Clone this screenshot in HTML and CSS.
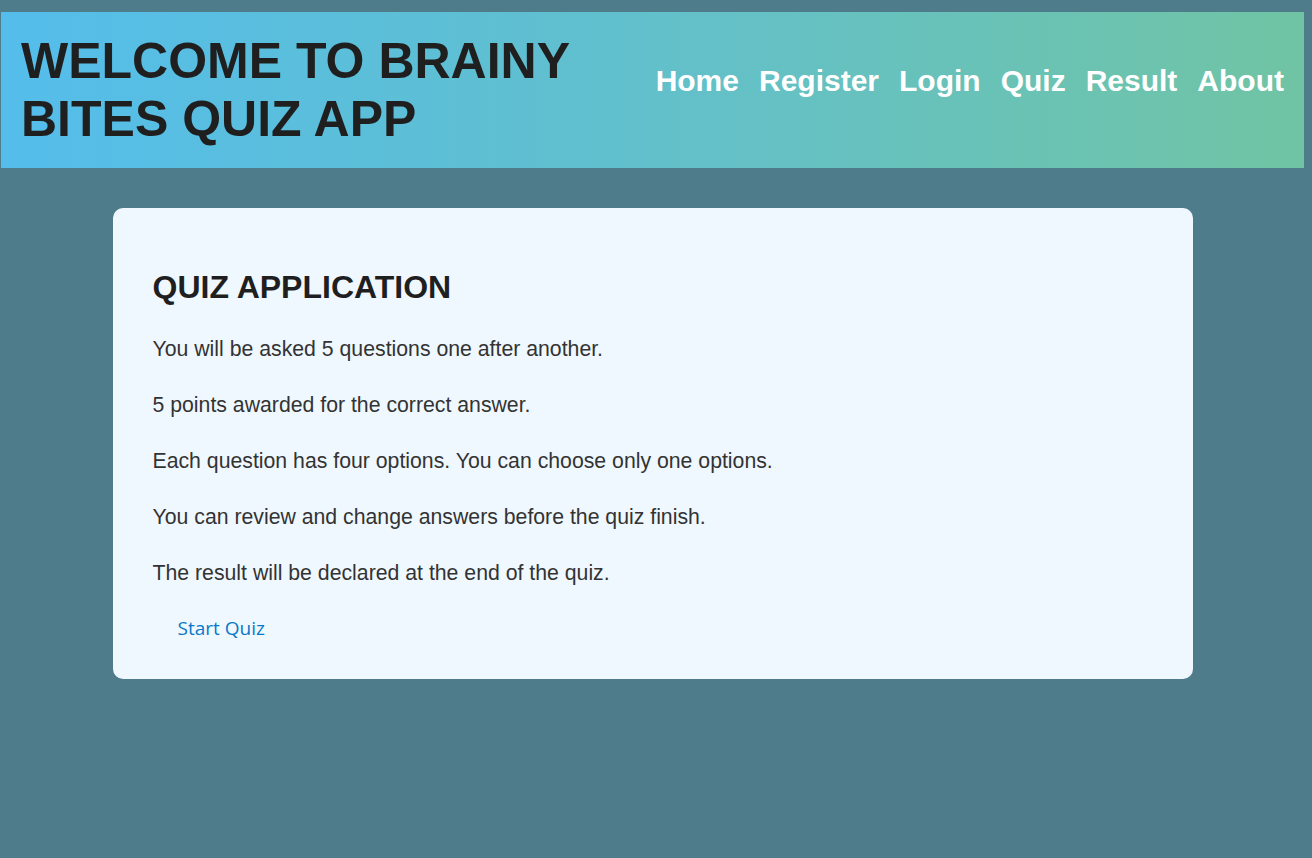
FILE: index.html
```html
<!DOCTYPE html>
<html lang="en">
<head>
<meta charset="utf-8">
<title>Brainy Bites Quiz App</title>
<link rel="stylesheet" href="styles.css">
</head>
<body>
<div class="page">
  <header class="site-header">
    <h1 class="site-title">WELCOME TO BRAINY BITES QUIZ APP</h1>
    <nav class="site-nav">
      <a href="#" class="nav-link">Home</a>
      <a href="#" class="nav-link">Register</a>
      <a href="#" class="nav-link">Login</a>
      <a href="#" class="nav-link">Quiz</a>
      <a href="#" class="nav-link">Result</a>
      <a href="#" class="nav-link">About</a>
    </nav>
  </header>
  <main class="card">
    <h2 class="card-title">QUIZ APPLICATION</h2>
    <p class="rule">You will be asked 5 questions one after another.</p>
    <p class="rule">5 points awarded for the correct answer.</p>
    <p class="rule">Each question has four options. You can choose only one options.</p>
    <p class="rule">You can review and change answers before the quiz finish.</p>
    <p class="rule">The result will be declared at the end of the quiz.</p>
    <button class="start-btn" type="button">Start Quiz</button>
  </main>
</div>
</body>
</html>
```
FILE: styles.css
```css
html, body {
  margin: 0;
  padding: 0;
}
body {
  background: #4e7c8a;
  font-family: "Liberation Sans", Arial, sans-serif;
  min-height: 858px;
}
.page {
  margin: 12px 8px 0 1px;
}
.site-header {
  display: flex;
  align-items: center;
  gap: 20px;
  padding: 20px;
  background: linear-gradient(to right, #54bdeb 0%, #62c0cb 50%, #70c4a4 100%);
}
.site-title {
  flex: 1;
  margin: 0;
  font-size: 50px;
  font-weight: bold;
  color: #1f1f1f;
  line-height: 58px;
}
.site-nav {
  display: flex;
  gap: 20px;
  flex: none;
  padding-bottom: 18px;
}
.nav-link {
  color: #ffffff;
  text-decoration: none;
  font-size: 30px;
  font-weight: bold;
}
.card {
  display: block;
  width: 1080px;
  box-sizing: border-box;
  margin: 40px auto 0;
  padding: 40px 40px 33px;
  background: #f0f8ff;
  border-radius: 10px;
}
.card-title {
  margin: 21px 0 26px;
  font-size: 32px;
  font-weight: bold;
  color: #1f1f1f;
}
.rule {
  margin: 21px 0;
  font-size: 21.25px;
  line-height: 35px;
  color: #333333;
}
.start-btn {
  display: inline-block;
  margin: 0;
  padding: 3px 25px 5px;
  border: none;
  background: transparent;
  color: #0a78c8;
  font-family: "Open Sans", "Noto Sans", sans-serif;
  font-size: 19px;
  cursor: pointer;
}
```
